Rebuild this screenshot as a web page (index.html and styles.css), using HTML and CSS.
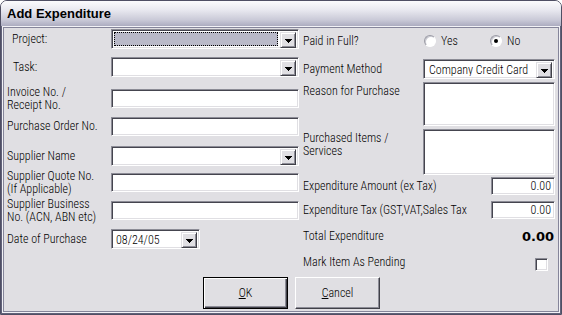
FILE: index.html
```html
<!DOCTYPE html>
<html lang="en">
<head>
    <meta charset="UTF-8">
    <meta name="viewport" content="width=device-width, initial-scale=1.0">
    <title>Add Expenditure</title>
    <link rel="stylesheet" href="styles.css">
</head>
<body>
    <div class="window">
        <div class="titlebar">Add Expenditure</div>
        <div class="frame">
            <div class="client">
                <div class="columns">
                    <!-- left side -->
                    <div class="col-left">
                        <div class="row">
                            <span class="label indent-1">Project:</span>
                            <div class="combo wide">
                                <span class="combo-value focus"></span>
                                <span class="drop"><svg width="7" height="4" viewBox="0 0 7 4"><path d="M0 0h7v1H0zM1 1h5v1H1zM2 2h3v1H2zM3 3h1v1H3z"/></svg></span>
                            </div>
                        </div>
                        <div class="row">
                            <span class="label indent-2">Task:</span>
                            <div class="combo wide">
                                <span class="combo-value"></span>
                                <span class="drop"><svg width="7" height="4" viewBox="0 0 7 4"><path d="M0 0h7v1H0zM1 1h5v1H1zM2 2h3v1H2zM3 3h1v1H3z"/></svg></span>
                            </div>
                        </div>
                        <div class="row short">
                            <span class="label">Invoice No. /<br>Receipt No.</span>
                            <div class="textbox wide"></div>
                        </div>
                        <div class="row short">
                            <span class="label">Purchase Order No.</span>
                            <div class="textbox wide"></div>
                        </div>
                        <div class="row">
                            <span class="label">Supplier Name</span>
                            <div class="combo wide">
                                <span class="combo-value"></span>
                                <span class="drop"><svg width="7" height="4" viewBox="0 0 7 4"><path d="M0 0h7v1H0zM1 1h5v1H1zM2 2h3v1H2zM3 3h1v1H3z"/></svg></span>
                            </div>
                        </div>
                        <div class="row short">
                            <span class="label">Supplier Quote No.<br>(If Applicable)</span>
                            <div class="textbox wide"></div>
                        </div>
                        <div class="row short">
                            <span class="label">Supplier Business<br>No. (ACN, ABN etc)</span>
                            <div class="textbox wide"></div>
                        </div>
                        <div class="row">
                            <span class="label">Date of Purchase</span>
                            <div class="combo date">
                                <span class="combo-value">08/24/05</span>
                                <span class="drop"><svg width="7" height="4" viewBox="0 0 7 4"><path d="M0 0h7v1H0zM1 1h5v1H1zM2 2h3v1H2zM3 3h1v1H3z"/></svg></span>
                            </div>
                        </div>
                    </div>

                    <!-- right side -->
                    <div class="col-right">
                        <div class="row paid">
                            <span class="label-r">Paid in Full?</span>
                            <span class="radio-opt"><span class="radio"></span>Yes</span>
                            <span class="radio-opt"><span class="radio checked"></span>No</span>
                        </div>
                        <div class="row">
                            <span class="label-r">Payment Method</span>
                            <div class="combo narrow">
                                <span class="combo-value">Company Credit Card</span>
                                <span class="drop"><svg width="7" height="4" viewBox="0 0 7 4"><path d="M0 0h7v1H0zM1 1h5v1H1zM2 2h3v1H2zM3 3h1v1H3z"/></svg></span>
                            </div>
                        </div>
                        <div class="row top">
                            <span class="label-r">Reason for Purchase</span>
                            <div class="textbox area reason"></div>
                        </div>
                        <div class="row top">
                            <span class="label-r">Purchased Items /<br>Services</span>
                            <div class="textbox area items"></div>
                        </div>
                        <div class="row money">
                            <span class="label-r">Expenditure Amount (ex Tax)</span>
                            <div class="textbox amount">0.00</div>
                        </div>
                        <div class="row money">
                            <span class="label-r">Expenditure Tax (GST,VAT,Sales Tax</span>
                            <div class="textbox amount">0.00</div>
                        </div>
                        <div class="row money">
                            <span class="label-r">Total Expenditure</span>
                            <span class="total">0.00</span>
                        </div>
                        <div class="row top">
                            <span class="label-r">Mark Item As Pending</span>
                            <span class="checkbox"></span>
                        </div>
                    </div>
                </div>

                <div class="buttons">
                    <button class="btn default"><u>O</u>K</button>
                    <button class="btn"><u>C</u>ancel</button>
                </div>
            </div>
        </div>
    </div>
</body>
</html>
```

FILE: styles.css
```css
body {
    margin: 0;
    font-family: "Roboto Condensed", "Liberation Sans", Arial, sans-serif;
    font-weight: 300;
    font-size: 12px;
    color: #000;
    background: #fff;
}

.window {
    width: 562px;
    height: 315px;
    box-sizing: border-box;
    border: 1px solid #4f4f64;
    border-radius: 7px 7px 0 0;
    display: flex;
    flex-direction: column;
    overflow: hidden;
}

.titlebar {
    height: 25px;
    flex: none;
    padding-left: 6px;
    display: flex;
    align-items: center;
    font-family: "Liberation Sans", Arial, sans-serif;
    font-weight: bold;
    font-size: 13px;
    background: linear-gradient(#fbfbfd 0%, #e9e9f0 35%, #cacad8 75%, #acacc0 100%);
}

.frame {
    flex: 1;
    display: flex;
    border: 1px solid #62627a;
    border-top: 0;
}

.client {
    flex: 1;
    background: #e0dfe3;
    border: 1px solid #f2f2f6;
    box-shadow: inset 1px 1px 0 #85859a, inset -1px -1px 0 #85859a;
    padding: 2px 4px 3px 4px;
}

.columns {
    display: flex;
    gap: 4px;
    height: 244px;
}

.col-left {
    width: 292px;
    display: grid;
    grid-template-columns: 292px;
    grid-template-rows: 28px 32px 28px 29px 27px 28px 28px 20px;
    align-content: start;
}

.col-right {
    width: 252px;
    display: grid;
    grid-template-columns: 252px;
    grid-template-rows: 30px 23px 47px 48px 24px 26px 26px 20px;
    align-content: start;
}

.row {
    display: flex;
    align-items: center;
    height: 20px;
}

.row.short {
    height: 19px;
}

.row.paid {
    height: 24px;
}

.row.top {
    align-items: flex-start;
    height: auto;
}

.row.money {
    height: 18px;
}

.label {
    width: 104px;
    flex: none;
    line-height: 13px;
    white-space: nowrap;
}

.label.indent-1 {
    padding-left: 5px;
    width: 99px;
}

.label.indent-2 {
    padding-left: 6px;
    width: 98px;
}

.label-r {
    width: 120px;
    flex: none;
    line-height: 13px;
    white-space: nowrap;
}

.row.top .label-r {
    padding-top: 3px;
}

/* sunken controls */
.textbox,
.combo {
    box-sizing: border-box;
    background: #fff;
    border: 1px solid;
    border-color: #8c8c96 #fff #fff #8c8c96;
    box-shadow: inset 1px 1px 0 #45454f, inset -1px -1px 0 #e0dfe3;
}

.textbox {
    height: 19px;
}

.textbox.wide {
    width: 188px;
}

.combo {
    height: 20px;
    display: flex;
    padding: 2px;
}

.combo.wide {
    width: 188px;
}

.combo.date {
    width: 89px;
}

.combo.narrow {
    width: 132px;
}

.combo-value {
    flex: 1;
    line-height: 16px;
    padding-left: 2px;
    white-space: nowrap;
    overflow: hidden;
}

.combo.narrow .combo-value {
    padding-left: 3px;
}

.combo-value.focus {
    background: #b9b9c8;
    outline: 1px dotted #000;
    outline-offset: -1px;
    margin-right: 2px;
}

.drop {
    width: 16px;
    height: 16px;
    box-sizing: border-box;
    flex: none;
    display: flex;
    align-items: center;
    justify-content: center;
    background: #e0dfe3;
    border: 1px solid;
    border-color: #e0dfe3 #404048 #404048 #e0dfe3;
    box-shadow: inset 1px 1px 0 #fff, inset -1px -1px 0 #8c8c96;
}

.drop svg {
    display: block;
    margin-top: 1px;
}

.textbox.area {
    width: 132px;
}

.textbox.reason {
    height: 44px;
}

.textbox.items {
    height: 46px;
}

.textbox.amount {
    width: 64px;
    height: 18px;
    margin-left: auto;
    text-align: right;
    line-height: 16px;
    padding-right: 3px;
}

.total {
    margin-left: auto;
    padding-right: 1px;
    font-family: "DejaVu Sans", Verdana, sans-serif;
    font-weight: bold;
    font-size: 13px;
}

.radio-opt {
    width: 69px;
    box-sizing: border-box;
    padding-left: 1px;
    display: flex;
    align-items: center;
    gap: 5px;
}

.radio {
    width: 12px;
    height: 12px;
    box-sizing: border-box;
    border-radius: 50%;
    background: #fff;
    border: 1px solid;
    border-color: #9a9aa4 #fff #fff #9a9aa4;
    box-shadow: inset 1px 1px 0 #c8c8d0;
    display: flex;
    align-items: center;
    justify-content: center;
}

.radio.checked::after {
    content: "";
    width: 4px;
    height: 4px;
    border-radius: 50%;
    background: #000;
}

.checkbox {
    width: 13px;
    height: 13px;
    box-sizing: border-box;
    margin: 5px 7px 0 auto;
    background: #fff;
    border: 1px solid;
    border-color: #8c8c96 #fff #fff #8c8c96;
    box-shadow: inset 1px 1px 0 #45454f, inset -1px -1px 0 #e0dfe3;
}

.buttons {
    display: flex;
    gap: 7px;
    margin-top: 4px;
    padding-left: 196px;
}

.btn {
    width: 85px;
    height: 32px;
    padding: 0;
    font-family: inherit;
    font-weight: inherit;
    font-size: 12px;
    color: #000;
    background: #e0dfe3;
    border: 1px solid;
    border-color: #fff #404048 #404048 #fff;
    box-shadow: inset -1px -1px 0 #8c8c96;
}

.btn.default {
    border: 1px solid #000;
    box-shadow: inset 1px 1px 0 #fff, inset -1px -1px 0 #404048, inset -2px -2px 0 #8c8c96;
}
```
